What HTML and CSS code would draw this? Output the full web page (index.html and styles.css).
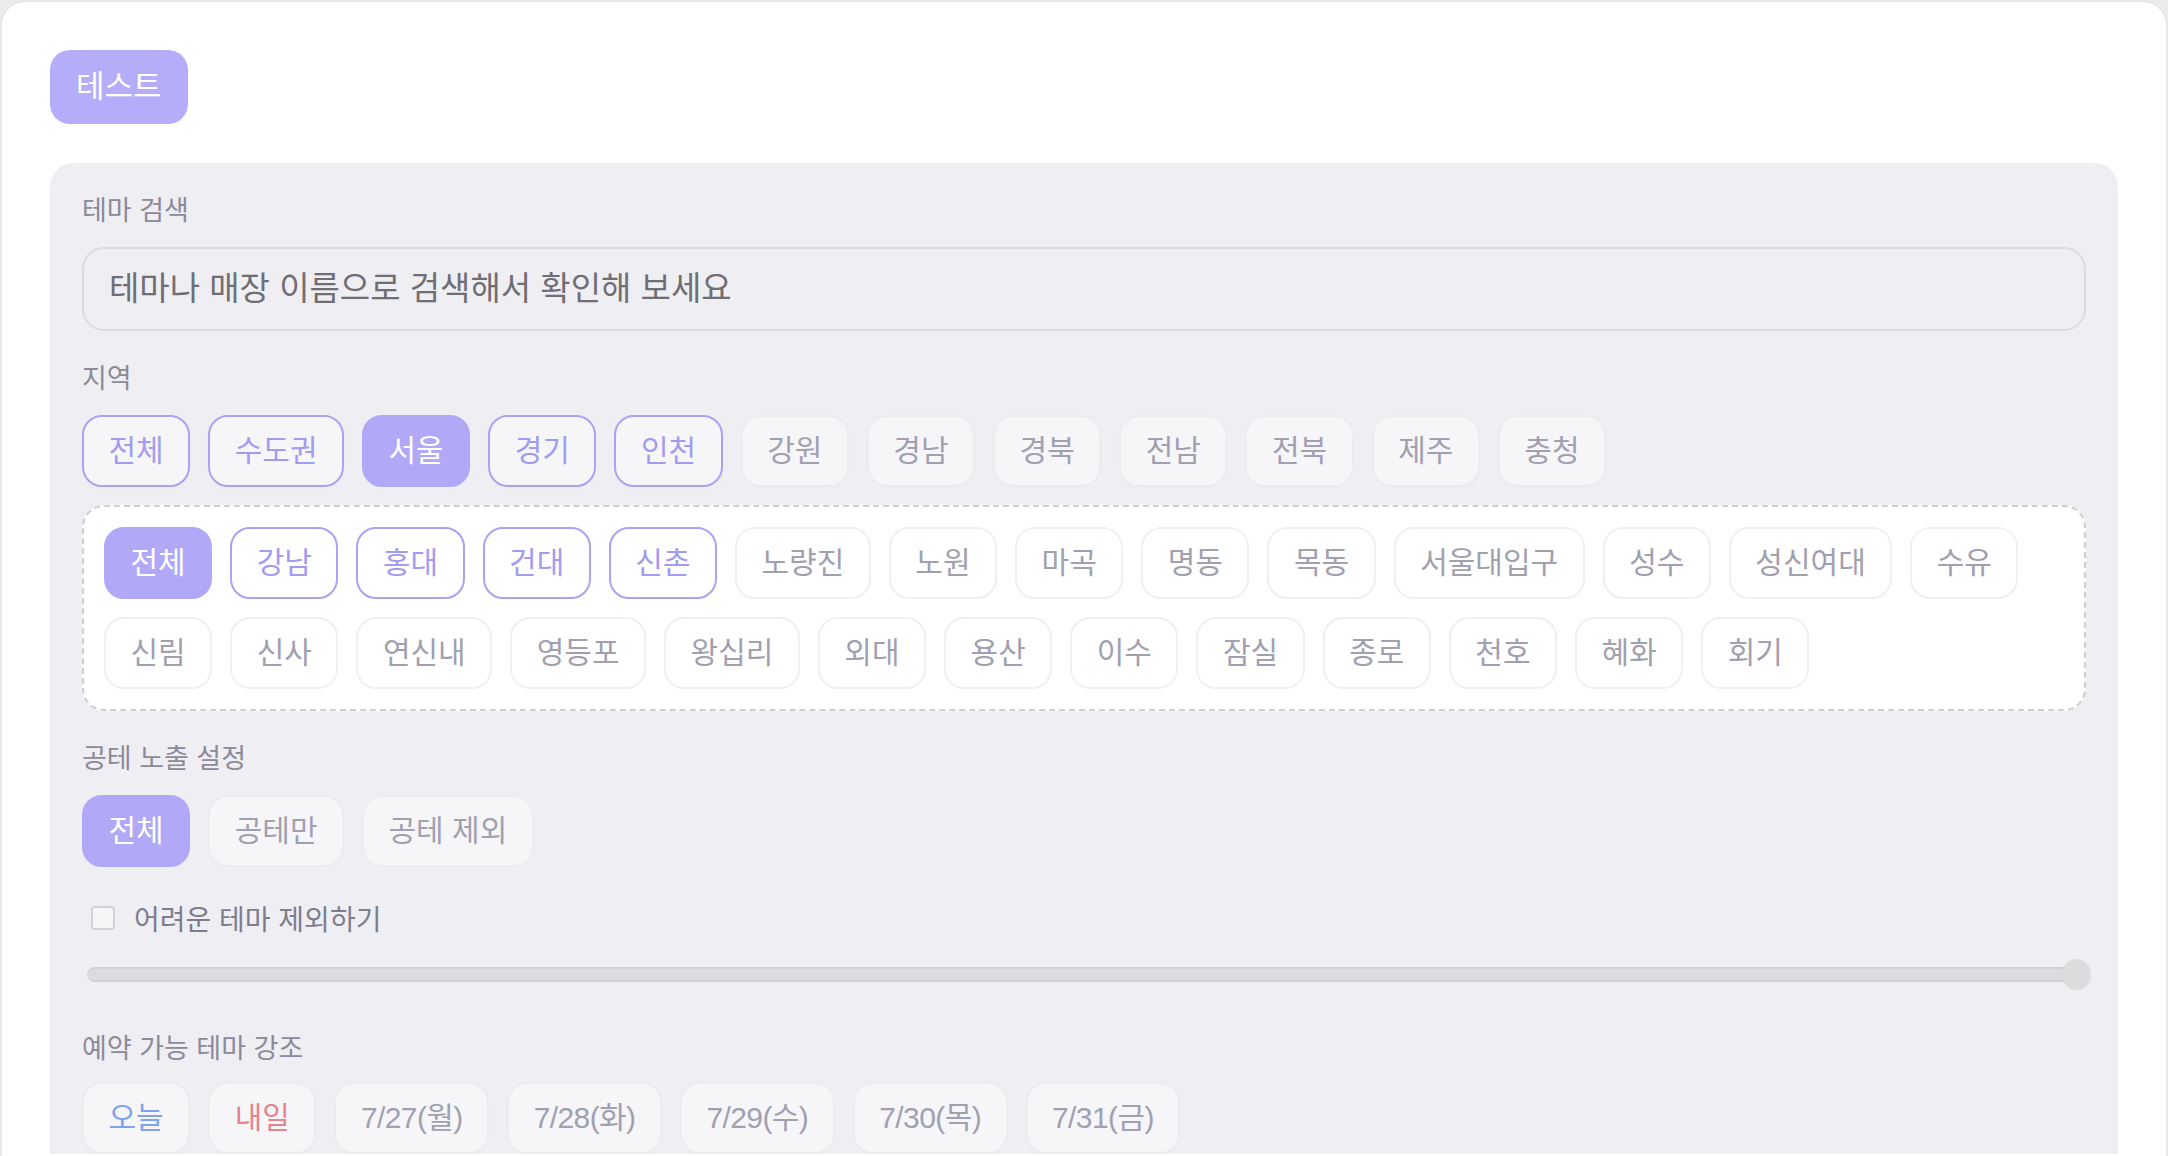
FILE: index.html
```html
<!DOCTYPE html>
<html lang="ko">
<head>
    <meta charset="UTF-8">
    <meta name="viewport" content="width=device-width, initial-scale=1.0">
    <title>테마 필터</title>
    <link rel="stylesheet" href="styles.css">
</head>
<body>
    <div class="page-card">
        <button class="test-button">테스트</button>

        <div class="filter-panel">
            <!-- 테마 검색 -->
            <div class="section">
                <p class="section-label">테마 검색</p>
                <input class="search-input" type="text" placeholder="테마나 매장 이름으로 검색해서 확인해 보세요">
            </div>

            <!-- 지역 -->
            <div class="section">
                <p class="section-label">지역</p>
                <div class="chip-row">
                    <span class="chip outlined">전체</span>
                    <span class="chip outlined">수도권</span>
                    <span class="chip active">서울</span>
                    <span class="chip outlined">경기</span>
                    <span class="chip outlined">인천</span>
                    <span class="chip">강원</span>
                    <span class="chip">경남</span>
                    <span class="chip">경북</span>
                    <span class="chip">전남</span>
                    <span class="chip">전북</span>
                    <span class="chip">제주</span>
                    <span class="chip">충청</span>
                </div>
                <div class="sub-area">
                    <span class="chip active">전체</span>
                    <span class="chip outlined">강남</span>
                    <span class="chip outlined">홍대</span>
                    <span class="chip outlined">건대</span>
                    <span class="chip outlined">신촌</span>
                    <span class="chip">노량진</span>
                    <span class="chip">노원</span>
                    <span class="chip">마곡</span>
                    <span class="chip">명동</span>
                    <span class="chip">목동</span>
                    <span class="chip">서울대입구</span>
                    <span class="chip">성수</span>
                    <span class="chip">성신여대</span>
                    <span class="chip">수유</span>
                    <span class="chip">신림</span>
                    <span class="chip">신사</span>
                    <span class="chip">연신내</span>
                    <span class="chip">영등포</span>
                    <span class="chip">왕십리</span>
                    <span class="chip">외대</span>
                    <span class="chip">용산</span>
                    <span class="chip">이수</span>
                    <span class="chip">잠실</span>
                    <span class="chip">종로</span>
                    <span class="chip">천호</span>
                    <span class="chip">혜화</span>
                    <span class="chip">회기</span>
                </div>
            </div>

            <!-- 공테 노출 설정 -->
            <div class="section">
                <p class="section-label">공테 노출 설정</p>
                <div class="chip-row">
                    <span class="chip active">전체</span>
                    <span class="chip">공테만</span>
                    <span class="chip">공테 제외</span>
                </div>
            </div>

            <label class="check-row">
                <span class="check-box"></span>
                어려운 테마 제외하기
            </label>

            <div class="slider">
                <div class="slider-track"></div>
                <div class="slider-thumb"></div>
            </div>

            <!-- 예약 가능 테마 강조 -->
            <div class="section section-dates">
                <p class="section-label">예약 가능 테마 강조</p>
                <div class="chip-row">
                    <span class="chip today">오늘</span>
                    <span class="chip tomorrow">내일</span>
                    <span class="chip date">7/27(월)</span>
                    <span class="chip date">7/28(화)</span>
                    <span class="chip date">7/29(수)</span>
                    <span class="chip date">7/30(목)</span>
                    <span class="chip date">7/31(금)</span>
                </div>
            </div>
        </div>
    </div>
</body>
</html>
```

FILE: styles.css
```css
html, body {
    height: 100%;
}

body {
    font-family: 'Liberation Sans', 'Noto Sans CJK KR', sans-serif;
    margin: 0;
    padding: 1px 1px 0 1px;
    box-sizing: border-box;
    background-color: #ebebeb;
    overflow: hidden;
}

.page-card {
    background-color: white;
    border: 1px solid #e2e2e4;
    border-bottom: none;
    border-radius: 24px 24px 0 0;
    padding: 48px 48px 0 48px;
    min-height: 100%;
    box-sizing: border-box;
}

.test-button {
    font-family: inherit;
    font-size: 31px;
    line-height: 40px;
    padding: 17px 26px;
    color: white;
    background-color: #b5adfa;
    border: none;
    border-radius: 20px;
}

.filter-panel {
    margin-top: 39px;
    background-color: #efeef3;
    border-radius: 24px 24px 0 0;
    padding: 32px 32px 0 32px;
}

.section + .section {
    margin-top: 32px;
}

.section-label {
    margin: 0 0 20px 0;
    font-size: 27px;
    line-height: 32px;
    color: #8b8a98;
}

.search-input {
    display: block;
    width: 100%;
    box-sizing: border-box;
    height: 84px;
    padding: 0 25px;
    font-family: inherit;
    font-size: 33px;
    background: transparent;
    border: 2px solid #dcdbe1;
    border-radius: 22px;
    outline: none;
}

.search-input::placeholder {
    color: #6f6f73;
}

.chip-row {
    display: flex;
    flex-wrap: wrap;
    gap: 18px;
}

.chip {
    display: inline-block;
    font-size: 30px;
    line-height: 40px;
    padding: 14px 24.5px;
    border: 2px solid #ececf0;
    border-radius: 20px;
    background-color: #f6f6f9;
    color: #a1a0b0;
    white-space: nowrap;
}

.chip.outlined {
    border-color: #aaa2f4;
    color: #a39bef;
}

.chip.active {
    border-color: #b1a9f7;
    background-color: #b1a9f7;
    color: white;
}

.chip.today {
    color: #7fa4ea;
}

.chip.tomorrow {
    color: #e3848f;
}

.chip.date {
    letter-spacing: -0.6px;
}

.sub-area {
    margin-top: 18px;
    display: flex;
    flex-wrap: wrap;
    gap: 18px;
    padding: 20px;
    background-color: white;
    border: 2px dashed #cfcfd2;
    border-radius: 22px;
}

.sub-area .chip {
    background-color: white;
    border-color: #f0f0f2;
}

.sub-area .chip.outlined {
    border-color: #aaa2f4;
}

.sub-area .chip.active {
    background-color: #b1a9f7;
    border-color: #b1a9f7;
}

.check-row {
    display: flex;
    align-items: center;
    gap: 19px;
    margin-top: 32px;
    padding-left: 9px;
    height: 38px;
    font-size: 28px;
    color: #7e7d8c;
}

.check-box {
    width: 20px;
    height: 20px;
    border: 2px solid #d2d2d6;
    border-radius: 4px;
    background-color: #f6f6f8;
}

.slider {
    display: flex;
    align-items: center;
    margin: 21px -5px 0 5px;
    height: 32px;
}

.slider-track {
    flex: 1;
    height: 11px;
    background-color: #dcdcde;
    border-top: 2px solid #d1d1d4;
    border-bottom: 2px solid #d1d1d4;
    border-radius: 8px;
}

.slider-thumb {
    width: 29px;
    height: 31px;
    margin-left: -14px;
    border-radius: 50%;
    background-color: #dcdcde;
}

.section-dates {
    margin-top: 43px;
}

.section-dates .section-label {
    margin-bottom: 17px;
}
```
